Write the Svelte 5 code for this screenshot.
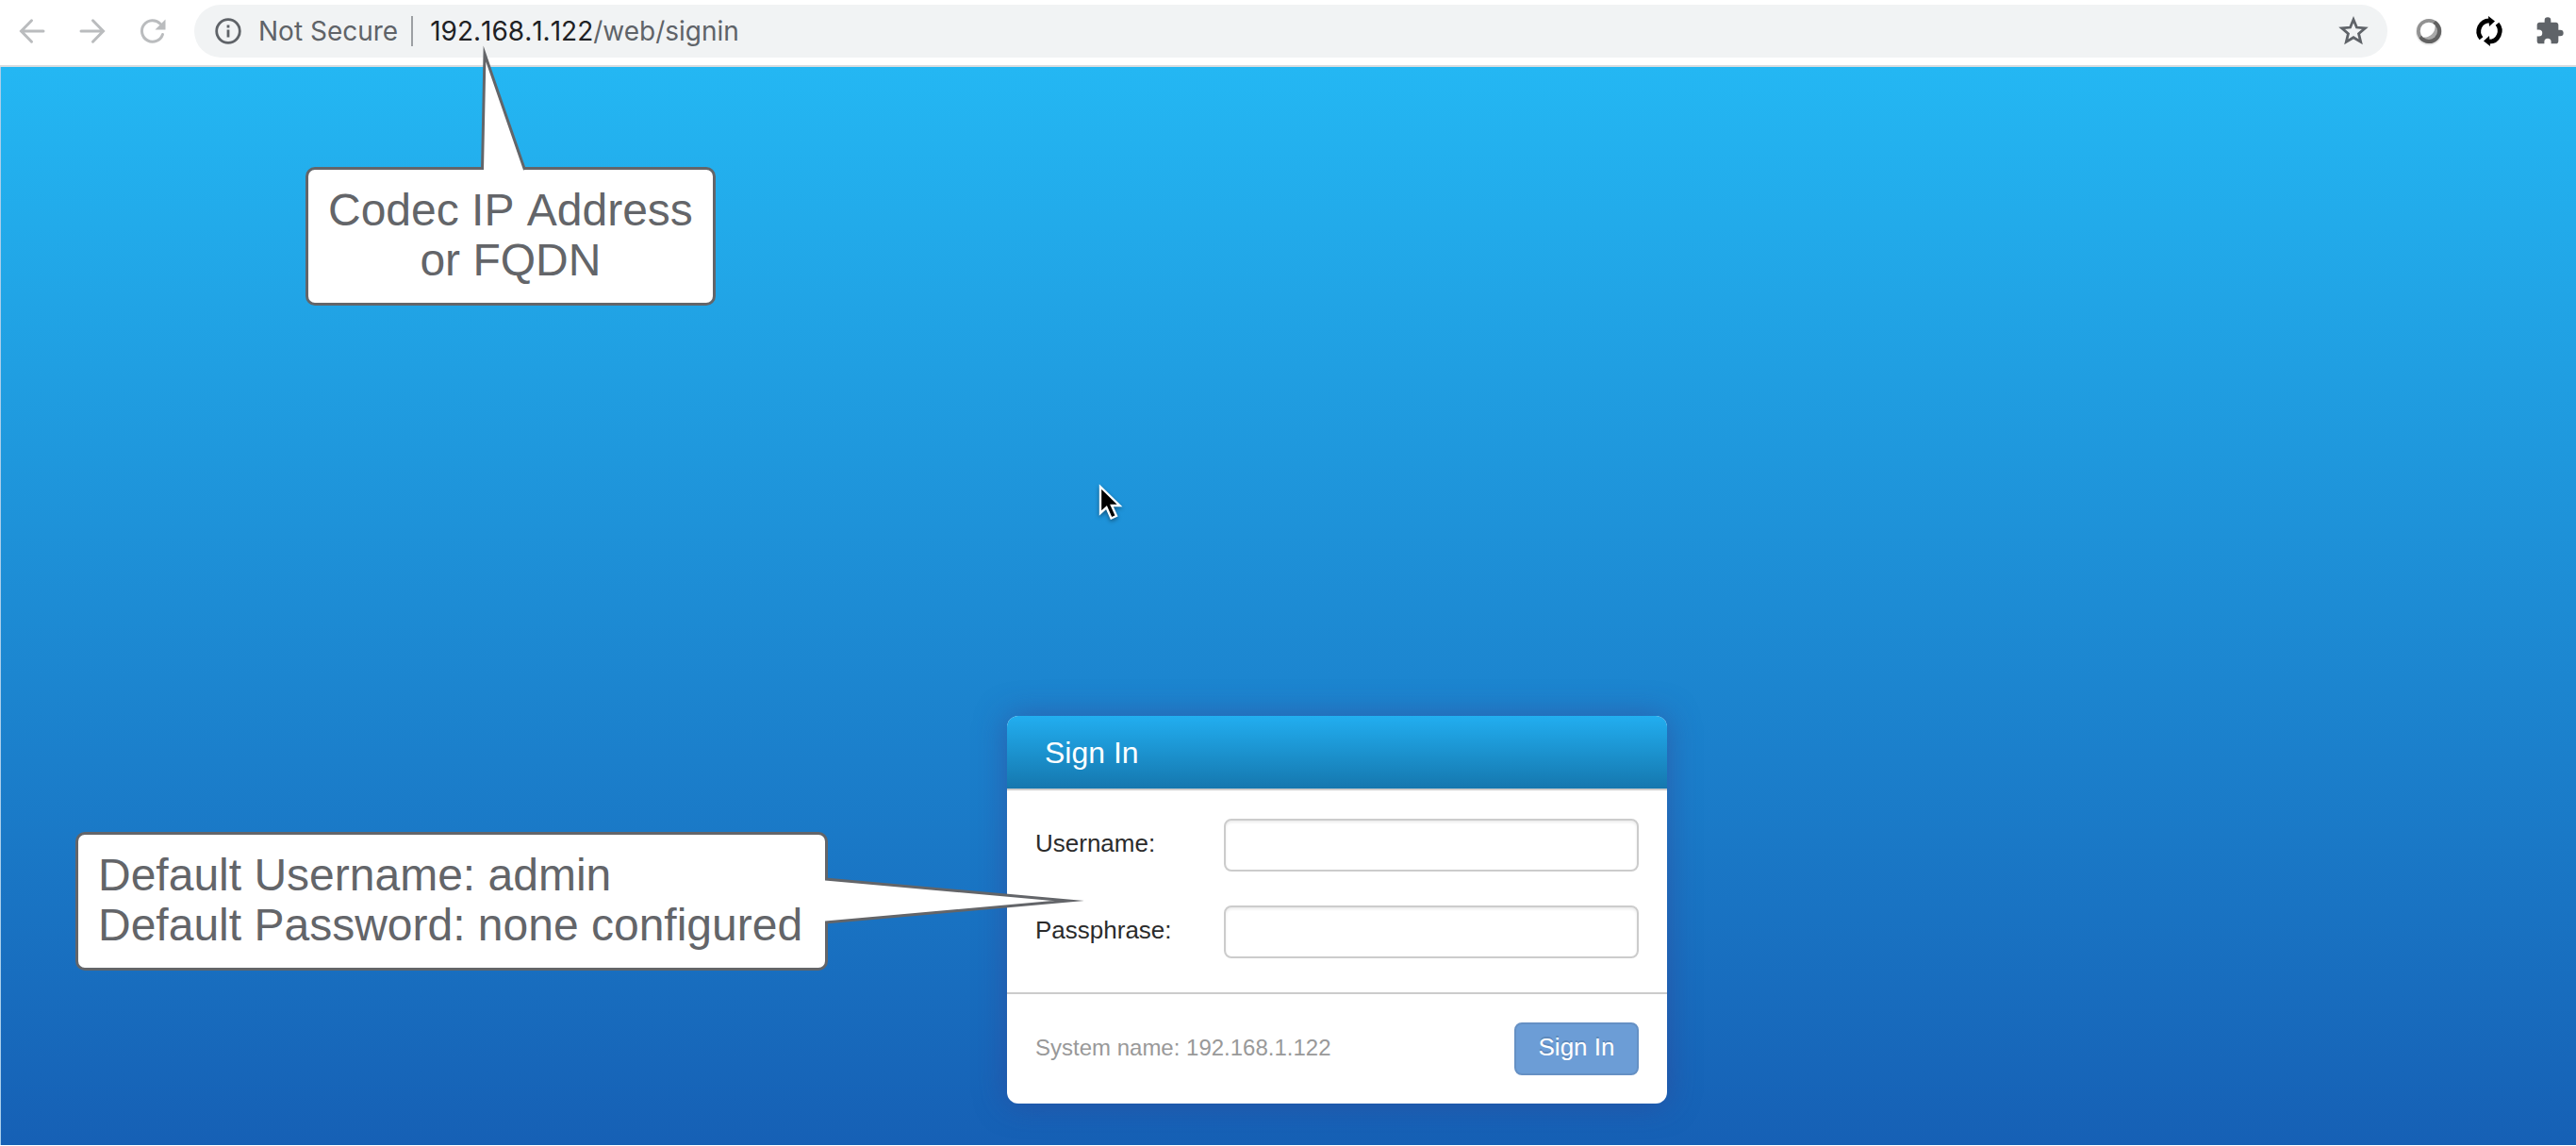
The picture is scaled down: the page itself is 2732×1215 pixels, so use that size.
<script>
  let username = $state('');
  let passphrase = $state('');
</script>

<div class="window">
  <header class="toolbar">
    <nav class="history" aria-label="History">
      <button class="tool" aria-label="Back">
        <svg viewBox="0 0 32 32"><path d="M28 16H5M15.500 4.800 4.500 16l11 11.200" /></svg>
      </button>
      <button class="tool" aria-label="Forward">
        <svg viewBox="0 0 32 32"><path d="M4 16h23M16.500 4.800 27.500 16l-11 11.200" /></svg>
      </button>
      <button class="tool" aria-label="Reload">
        <svg viewBox="0 0 32 32">
          <path d="M26.500 19.500A11.300 11.300 0 1 1 24 8.200" />
          <path class="solid" d="M29.500 3.500v11H18.500z" />
        </svg>
      </button>
    </nav>
    <div class="omnibox">
      <svg class="info" viewBox="0 0 28 28" aria-hidden="true">
        <circle cx="14" cy="14" r="12.300" />
        <path d="M14 12.500v8M14 7.500v3" />
      </svg>
      <span class="security">Not Secure</span>
      <span class="rule"></span>
      <span class="url"><b>192.168.1.122</b>/web/signin</span>
      <button class="star" aria-label="Bookmark this page">
        <svg viewBox="0 0 30 30"><path d="M15 3.500l3.200 7.800 8.400.7-6.400 5.500 2 8.200-7.200-4.400-7.200 4.400 2-8.200-6.400-5.500 8.400-.7z" /></svg>
      </button>
    </div>
    <div class="extensions">
      <button class="ext" aria-label="Sphere extension">
        <svg viewBox="0 0 32 32">
          <circle cx="16" cy="17" r="14" fill="#e8e8e8" />
          <circle cx="16" cy="16" r="13" fill="#929292" />
          <path d="M23 5a13 13 0 1 1-17.500 18.500z" fill="#626262" />
          <circle cx="16" cy="16" r="9" fill="#a9a9a9" />
          <path d="M22.500 9.800A9 9 0 1 0 9.800 22.500 11.500 11.500 0 0 0 22.500 9.800z" fill="#fff" />
        </svg>
      </button>
      <button class="ext" aria-label="Sync extension">
        <svg viewBox="0 0 32 32">
          <g fill="none" stroke="#000" stroke-width="4.800">
            <path d="M7.500 23.700A11.500 11.500 0 0 1 16 4.800" />
            <path d="M24.500 8.300A11.500 11.500 0 0 1 16 27.200" />
          </g>
          <path d="M15 0l7 5.500-6 5.500z" />
          <path d="M17 32l-7-5.500 6-5.500z" />
        </svg>
      </button>
      <button class="ext" aria-label="Extensions">
        <svg viewBox="0 0 24 24"><path fill="#5f6368" d="M20.500 11H19V7c0-1.100-.9-2-2-2h-4V3.500a2.500 2.500 0 0 0-5 0V5H4c-1.100 0-2 .9-2 2v3.800h1.500a2.700 2.700 0 0 1 0 5.400H2V20c0 1.100.9 2 2 2h3.800v-1.500a2.700 2.700 0 0 1 5.400 0V22H17c1.100 0 2-.9 2-2v-4h1.500a2.500 2.500 0 0 0 0-5z" /></svg>
      </button>
    </div>
  </header>

  <main class="page">
    <form class="card" onsubmit={(e) => e.preventDefault()}>
      <h1>Sign In</h1>
      <div class="fields">
        <label for="username">Username:</label>
        <input id="username" type="text" bind:value={username} />
        <label for="passphrase">Passphrase:</label>
        <input id="passphrase" type="password" bind:value={passphrase} />
      </div>
      <footer>
        <span class="system">System name: 192.168.1.122</span>
        <button class="submit" type="submit">Sign In</button>
      </footer>
    </form>
  </main>

  <aside class="callout address">
    <svg class="tail" viewBox="0 0 60 140" aria-hidden="true"><path d="M8.500 137 11 14 53.500 137" /></svg>
    Codec IP Address<br />or FQDN
  </aside>

  <aside class="callout defaults">
    <svg class="tail" viewBox="0 0 280 60" aria-hidden="true"><path d="M0 7 258 30 0 53" /></svg>
    Default Username: admin<br />Default Password: none configured
  </aside>

  <svg class="cursor" viewBox="0 0 28 42" aria-hidden="true">
    <path d="M3 3v28l6.500-6 5 11.500 5.500-2.500-5-11h8.500z" />
  </svg>
</div>

<style>
  :global(body) {
    margin: 0;
  }

  .window {
    position: relative;
    display: flex;
    flex-direction: column;
    min-height: 100vh;
    background: #fff;
    font-family: 'Liberation Sans', Arial, sans-serif;
  }

  button {
    padding: 0;
    border: 0;
    background: none;
    font: inherit;
  }

  svg {
    display: block;
  }

  .toolbar {
    display: flex;
    align-items: center;
    gap: 28px;
    padding: 5px 12px 8px 18px;
    border-bottom: 2px solid #d9dcdf;
  }

  .history,
  .extensions {
    display: flex;
    gap: 32px;
  }

  .tool svg,
  .ext svg {
    width: 32px;
    height: 32px;
  }

  .tool path {
    fill: none;
    stroke: #babcbe;
    stroke-linecap: round;
    stroke-width: 3;
  }

  .tool .solid {
    fill: #babcbe;
    stroke: none;
  }

  .omnibox {
    display: flex;
    flex: 1;
    align-items: center;
    box-sizing: border-box;
    height: 56px;
    padding: 0 20px 0 22px;
    border-radius: 28px;
    background: #f1f3f4;
    color: #5f6368;
    font-family: Inter, Roboto, sans-serif;
    font-size: 28px;
  }

  .info {
    width: 28px;
    height: 28px;
    margin-right: 18px;
    fill: none;
    stroke: #5f6368;
    stroke-width: 2.8;
  }

  .rule {
    width: 2px;
    height: 32px;
    margin: 0 18px 0 14px;
    background: #9c9fa3;
  }

  .url {
    flex: 1;
  }

  .url b {
    color: #202124;
    font-weight: 400;
    font-kerning: none;
  }

  .star svg {
    width: 32px;
    height: 32px;
    fill: none;
    stroke: #5f6368;
    stroke-width: 2.6;
  }

  .page {
    display: flex;
    flex: 1;
    flex-direction: column;
    align-items: center;
    justify-content: flex-end;
    margin-bottom: 1px;
    padding: 44px 0 44px 103px;
    border-left: 1px solid #a9cdea;
    background: linear-gradient(#24b7f3, #1660b5);
  }

  .card {
    width: 700px;
    border-radius: 12px;
    background: #fff;
    box-shadow: 0 0 32px rgba(60, 60, 140, 0.5);
  }

  h1 {
    margin: 0;
    padding: 21px 40px 19px;
    border-bottom: 2px solid #ccc;
    border-radius: 12px 12px 0 0;
    background: linear-gradient(#22aef0, #1577ae);
    color: #fff;
    font-size: 32px;
    font-weight: 400;
    line-height: 37px;
  }

  .fields {
    display: grid;
    grid-template-columns: 200px 1fr;
    row-gap: 36px;
    align-items: center;
    padding: 30px 30px 36px;
    color: #2b2b2b;
    font-size: 26px;
  }

  label,
  .system {
    padding-bottom: 3px;
  }

  input {
    box-sizing: border-box;
    width: 100%;
    height: 56px;
    padding: 0 12px;
    border: 2px solid #ccc;
    border-radius: 8px;
    background: #fff;
    box-shadow: inset 0 2px 3px rgba(0, 0, 0, 0.08);
    color: #333;
    font: inherit;
  }

  footer {
    display: flex;
    align-items: center;
    justify-content: space-between;
    padding: 30px;
    border-top: 2px solid #ccc;
    color: #999;
    font-size: 24px;
  }

  .submit {
    width: 132px;
    height: 56px;
    padding-bottom: 3px;
    border: 2px solid #6590c4;
    border-radius: 8px;
    background: #6c9dd6;
    color: #fff;
    font-size: 26px;
    text-shadow: 0 -2px 0 rgba(0, 0, 0, 0.15);
  }

  .callout {
    position: absolute;
    padding: 16px 21px 19px;
    border: 3px solid #636569;
    border-radius: 10px;
    background: #fff;
    color: #636569;
    font-size: 48px;
    font-kerning: none;
    line-height: 53px;
    white-space: nowrap;
  }

  .address {
    top: 177px;
    left: 324px;
    text-align: center;
  }

  .defaults {
    top: 882px;
    left: 80px;
    padding-right: 24px;
  }

  .tail {
    position: absolute;
    fill: #fff;
    stroke: #636569;
    stroke-width: 3;
    stroke-miterlimit: 30;
  }

  .address .tail {
    top: -137px;
    left: 176px;
    width: 60px;
    height: 140px;
  }

  .defaults .tail {
    top: 40px;
    left: 100%;
    width: 280px;
    height: 60px;
  }

  .cursor {
    position: absolute;
    top: 513px;
    left: 1164px;
    width: 28px;
    height: 42px;
    fill: #000;
    stroke: #fff;
    stroke-width: 2.4;
    filter: drop-shadow(0 2px 2px rgba(0, 0, 0, 0.4));
  }
</style>
